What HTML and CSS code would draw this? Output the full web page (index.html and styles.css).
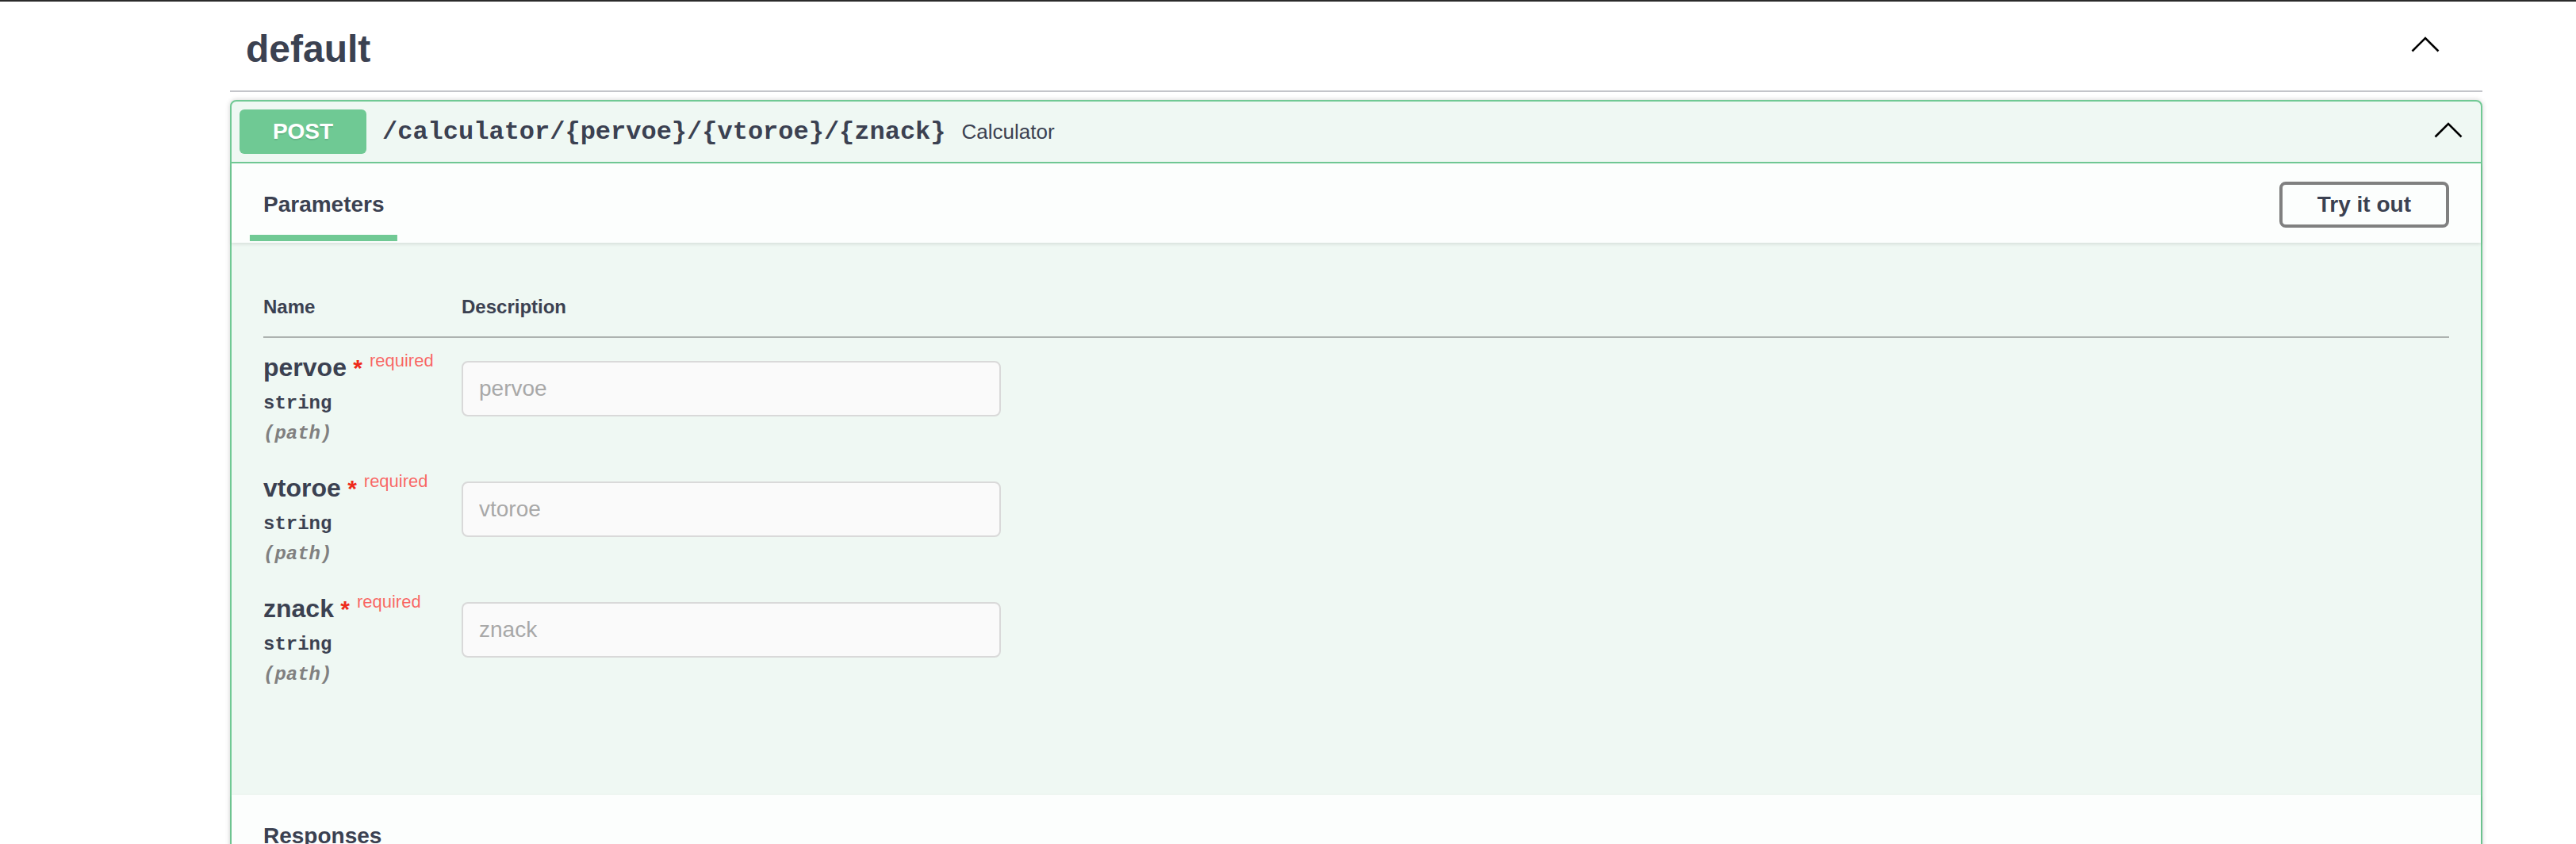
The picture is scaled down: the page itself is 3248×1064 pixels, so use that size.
FILE: index.html
```html
<!DOCTYPE html>
<html lang="en">
<head>
<meta charset="utf-8">
<title>Swagger UI - default</title>
<link rel="stylesheet" href="styles.css">
</head>
<body>
<div class="wrapper">
  <section class="tag-section">
    <h3 class="tag">
      <span class="tag-name">default</span>
      <svg class="tag-arrow" width="36" height="20" viewBox="0 0 36 20" aria-hidden="true"><polyline points="1.5,18.5 18,2 34.5,18.5" fill="none" stroke="#000" stroke-width="2.6"/></svg>
    </h3>
    <div class="opblock">
      <div class="summary">
        <span class="method">POST</span>
        <span class="path">/calculator/{pervoe}/{vtoroe}/{znack}</span>
        <span class="summary-desc">Calculator</span>
        <svg class="summary-arrow" width="36" height="20" viewBox="0 0 36 20" aria-hidden="true"><polyline points="1.5,18.5 18,2 34.5,18.5" fill="none" stroke="#000" stroke-width="2.6"/></svg>
      </div>
      <div class="section-header">
        <h4 class="tab-title"><span class="tab-active">Parameters</span></h4>
        <button class="try-btn">Try it out</button>
      </div>
      <div class="params">
        <table class="param-table">
          <thead>
            <tr><th class="col-name">Name</th><th>Description</th></tr>
          </thead>
          <tbody>
            <tr>
              <td class="col-name">
                <div class="p-name">pervoe<span class="star">&nbsp;*</span><span class="req">required</span></div>
                <div class="p-type">string</div>
                <div class="p-in">(path)</div>
              </td>
              <td><input class="p-input" type="text" placeholder="pervoe" disabled></td>
            </tr>
            <tr>
              <td class="col-name">
                <div class="p-name">vtoroe<span class="star">&nbsp;*</span><span class="req">required</span></div>
                <div class="p-type">string</div>
                <div class="p-in">(path)</div>
              </td>
              <td><input class="p-input" type="text" placeholder="vtoroe" disabled></td>
            </tr>
            <tr>
              <td class="col-name">
                <div class="p-name">znack<span class="star">&nbsp;*</span><span class="req">required</span></div>
                <div class="p-type">string</div>
                <div class="p-in">(path)</div>
              </td>
              <td><input class="p-input" type="text" placeholder="znack" disabled></td>
            </tr>
          </tbody>
        </table>
      </div>
      <div class="section-header">
        <h4 class="tab-title">Responses</h4>
      </div>
      <div class="responses-body"></div>
    </div>
  </section>
</div>
</body>
</html>
```
FILE: styles.css
```css
html, body {
  margin: 0;
  padding: 0;
  background: #fff;
}
body {
  border-top: 2px solid #2b2b2b;
  font-family: "Liberation Sans", Arial, sans-serif;
  color: #3b4151;
}
.wrapper {
  width: 2840px;
  margin-left: 290px;
}
.tag {
  display: flex;
  justify-content: space-between;
  align-items: flex-start;
  box-sizing: border-box;
  height: 114px;
  margin: 0 0 10px;
  padding: 32px 54px 0 20px;
  border-bottom: 2px solid #c4c5ca;
  font-size: 48px;
  font-weight: 700;
  line-height: 56px;
}
.tag-arrow {
  margin-top: 12px;
}
.opblock {
  border: 2px solid #70c994;
  border-radius: 8px;
  background: #eff8f3;
  box-shadow: 0 0 6px rgba(0, 0, 0, 0.19);
}
.summary {
  display: flex;
  align-items: center;
  padding: 10px;
  border-bottom: 2px solid #70c994;
}
.method {
  min-width: 160px;
  padding: 12px 0;
  border-radius: 6px;
  background: #6fc994;
  color: #fff;
  font-size: 28px;
  font-weight: 700;
  line-height: 32px;
  text-align: center;
  text-shadow: 0 2px 0 rgba(0, 0, 0, 0.1);
}
.path {
  padding: 0 20px;
  font-family: "Liberation Mono", "Courier New", monospace;
  font-size: 32px;
  font-weight: 700;
  color: #3b4151;
}
.summary-desc {
  flex: 1 1 auto;
  font-size: 26px;
  color: #3b4151;
}
.summary-arrow {
  margin: 0 13px 4px 0;
}
.section-header {
  position: relative;
  z-index: 1;
  display: flex;
  justify-content: space-between;
  align-items: center;
  box-sizing: border-box;
  min-height: 100px;
  padding: 18px 40px 14px;
  background: rgba(255, 255, 255, 0.8);
  box-shadow: 0 2px 4px rgba(0, 0, 0, 0.1);
}
.tab-title {
  margin: 0;
  font-size: 28px;
  font-weight: 700;
}
.tab-active {
  position: relative;
}
.tab-active::after {
  content: "";
  position: absolute;
  left: 50%;
  bottom: -31px;
  width: 122%;
  height: 8px;
  transform: translateX(-50%);
  background: #70c994;
}
.try-btn {
  padding: 10px 44px;
  border: 4px solid #808080;
  border-radius: 8px;
  background: transparent;
  color: #3b4151;
  font-family: "Liberation Sans", Arial, sans-serif;
  font-size: 28px;
  font-weight: 700;
  line-height: 30px;
}
.params {
  padding: 40px 40px 120px;
}
.param-table {
  width: 100%;
  border-collapse: collapse;
}
.param-table th {
  padding: 27px 0 24px;
  border-bottom: 2px solid #adb3b0;
  font-size: 24px;
  font-weight: 700;
  line-height: 27px;
  text-align: left;
}
.param-table .col-name {
  width: 250px;
}
.param-table td {
  padding: 19px 0 18px;
  vertical-align: top;
}
.p-name {
  font-size: 32px;
  font-weight: 700;
  line-height: 37px;
  white-space: nowrap;
}
.star {
  color: #ee2b1b;
  font-size: 30px;
}
.req {
  position: relative;
  top: -12px;
  padding: 0 10px 0 9px;
  color: rgba(255, 0, 0, 0.6);
  font-size: 22px;
  font-weight: 400;
}
.p-type {
  padding: 10px 0;
  font-family: "Liberation Mono", "Courier New", monospace;
  font-size: 24px;
  font-weight: 700;
  line-height: 28px;
}
.p-in {
  font-family: "Liberation Mono", "Courier New", monospace;
  font-size: 24px;
  font-weight: 700;
  font-style: italic;
  line-height: 27px;
  color: #808080;
}
.p-input {
  display: block;
  box-sizing: border-box;
  width: 680px;
  margin: 10px 0;
  padding: 17px 20px;
  border: 2px solid #d9d9d9;
  border-radius: 8px;
  background: #fafafa;
  font-family: "Liberation Sans", Arial, sans-serif;
  font-size: 28px;
  line-height: 32px;
  color: #3b4151;
}
.p-input::placeholder {
  color: #a8a8a8;
}
.responses-body {
  height: 200px;
  background: #eff8f3;
}
```
